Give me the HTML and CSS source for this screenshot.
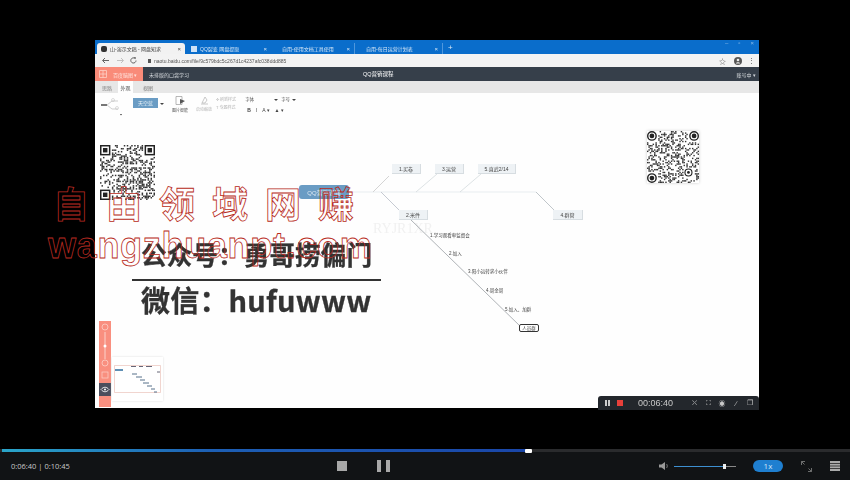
FILE: index.html
```html
<!DOCTYPE html>
<html lang="en">
<head>
    <meta charset="UTF-8">
    <title>Video player</title>
    <link rel="stylesheet" href="styles.css">
</head>
<body>
    <div class="stage">
        <div class="window">
            <div class="tabs">
                <div class="tab active"><span class="favicon dark"></span><span class="tab-name">山-演示文稿 - 网盘知求</span><span class="tab-x">×</span></div>
                <div class="tab"><span class="favicon blue"></span><span class="tab-name">QQ裂变 网盘提取</span><span class="tab-x">×</span></div>
                <div class="tab sep"><span class="tab-name indent">自用-使用文档工具使用</span><span class="tab-x">×</span></div>
                <div class="tab sep wide"><span class="tab-name indent">自用-每日运营计划表</span><span class="tab-x">×</span></div>
                <span class="tab-add">+</span>
                <div class="win-btns"><span>–</span><span>▫</span><span>×</span></div>
            </div>
            <div class="address">
                <svg class="nav" width="46" height="9" viewBox="0 0 46 9">
                    <path d="M9 4.500H3M5 2 2.500 4.500 5 7" fill="none" stroke="#555" stroke-width=".9"/>
                    <path d="M17 4.500h6M21 2l2.500 2.500L21 7" fill="none" stroke="#bbb" stroke-width=".9"/>
                    <path d="M35 2.400a2.600 2.600 0 1 0 1 2.100" fill="none" stroke="#555" stroke-width=".9"/>
                    <path d="M33.800 1l2 .2-.2 2z" fill="#555"/>
                </svg>
                <span class="lock"></span>
                <span class="url">naotu.baidu.com/file/9c579bdc5c267d1c4237afc038ddd885</span>
                <span class="star">☆</span>
                <svg class="avatar" width="8" height="8" viewBox="0 0 8 8"><circle cx="4" cy="4" r="4" fill="#555"/><circle cx="4" cy="3" r="1.300" fill="#eee"/><path d="M1.800 6.400c.6-1.500 3.800-1.500 4.400 0z" fill="#eee"/></svg>
                <span class="kebab">⋮</span>
            </div>
            <div class="app-head">
                <div class="brand">
                    <svg width="8" height="8" viewBox="0 0 8 8"><path d="M.5.5h7v7h-7zM.5 4h7M4 .5v7" fill="none" stroke="#ffd9d0" stroke-width=".7"/></svg>
                    <span>百度脑图 ▾</span>
                </div>
                <span class="doc-path">未排版的口袋学习</span>
                <span class="doc-title">QQ营销课程</span>
                <span class="account">账号中 ▾</span>
            </div>
            <div class="menu-tabs">
                <span>思路</span>
                <span class="on">外观</span>
                <span>视图</span>
            </div>
            <div class="toolbar">
                <svg class="tool-map" width="24" height="20" viewBox="0 0 24 20">
                    <path d="M1 9h6" stroke="#555" stroke-width="1.600"/>
                    <path d="M7 9 12 5M7 9l5 4M12 5h6M12 13h6" stroke="#bbb" fill="none" stroke-width=".7"/>
                    <circle cx="13" cy="4" r="1.500" fill="none" stroke="#bbb" stroke-width=".5"/>
                    <circle cx="17" cy="12" r="1.500" fill="none" stroke="#bbb" stroke-width=".5"/>
                    <path d="M20 18l2 0-1 1.500z" fill="#333"/>
                </svg>
                <span class="skin-btn">天空蓝</span>
                <span class="caret"></span>
                <div class="tool-col first">
                    <svg width="13" height="10" viewBox="0 0 13 10"><path d="M2 .5h6v8H2z" fill="none" stroke="#999" stroke-width=".7"/><path d="M6 3l5 2-5 3z" fill="#555"/></svg>
                    <span>图片智能</span>
                </div>
                <div class="tool-col pale">
                    <svg width="9" height="9" viewBox="0 0 9 9"><path d="M1 8h7M2 7l3-6 2 3-2 3z" fill="none" stroke="#bbb" stroke-width=".8"/></svg>
                    <span>启动缩放</span>
                </div>
                <div class="tool-rows pale">
                    <span>✣ 刷新样式</span>
                    <span>T 专题样式</span>
                </div>
                <div class="font-tools">
                    <div class="font-row"><span class="font-name">字体</span><span class="caret small"></span><span class="font-size">字号</span><span class="caret small"></span></div>
                    <div class="font-row icons"><b>B</b><i>I</i><span>A ▾</span><span class="bucket">▲ ▾</span></div>
                </div>
            </div>
            <div class="canvas">
                <div class="faint">RYJR1XR</div>
                <svg class="links" width="664" height="293" viewBox="95 115 664 293">
                    <path d="M349 192H536" stroke="#e8edf0" stroke-width="1" fill="none"/>
                    <path d="M373 192 389 176" stroke="#d4d4d4" stroke-width="1" fill="none"/>
                    <path d="M416 192 437 174M460 192 481 174" stroke="#d4dadd" stroke-width=".8" fill="none"/>
                    <path d="M536 192 554 210" stroke="#c0c6ca" stroke-width="1" fill="none"/>
                    <path d="M381 192 399 210" stroke="#b8bcc6" stroke-width=".8" fill="none"/>
                    <path d="M410 219 521 327" stroke="#9aa0a4" stroke-width=".8" fill="none"/>
                </svg>
                <div class="node root">QQ营销课程</div>
                <div class="node n1">1.买卷</div>
                <div class="node n2">3.运营</div>
                <div class="node n3">5.直武2/14</div>
                <div class="node n4">2.米件</div>
                <div class="node n5">4.群管</div>
                <div class="node n6">人员群</div>
                <span class="leaf l1">1.学习观看率监督会</span>
                <span class="leaf l2">2.加入</span>
                <span class="leaf l3">3.阳小运转求小伙伴</span>
                <span class="leaf l4">4.周金周</span>
                <span class="leaf l5">5.加入、加群</span>
                <svg class="qr qr-left" data-seed="17" data-round="0" width="55" height="55" viewBox="0 0 37 37"></svg>
                <svg class="qr qr-right" data-seed="91" data-round="1" width="52" height="52" viewBox="0 0 37 37"></svg>
                <div class="zoom-bar">
                    <svg width="12" height="86" viewBox="0 0 12 86">
                        <circle cx="6" cy="6" r="3" fill="none" stroke="#fbd0c8" stroke-width=".8"/>
                        <path d="M6 11V38" stroke="#fde3de" stroke-width=".8"/>
                        <circle cx="6" cy="25" r="1.500" fill="#fff"/>
                        <circle cx="6" cy="42" r="3" fill="none" stroke="#fbd0c8" stroke-width=".8"/>
                        <rect x="3" y="51" width="6" height="6" fill="none" stroke="#fbd0c8" stroke-width=".7"/>
                        <rect y="62" width="12" height="13" fill="#4b4d5c"/>
                        <path d="M2 68.500c2.500-3 5.500-3 8 0-2.500 3-5.500 3-8 0z" fill="none" stroke="#fff" stroke-width=".8"/>
                        <circle cx="6" cy="68.500" r="1" fill="#fff"/>
                    </svg>
                </div>
                <div class="minimap">
                    <svg width="47" height="28" viewBox="0 0 47 28">
                        <path d="M.5.500h46v27H.500z" fill="#fff" stroke="#e7b9ae" stroke-width=".6"/>
                        <path d="M1 5h8" stroke="#5f8fb4" stroke-width="2"/>
                        <path d="M17 1.500h5M25 1.500h4M32 1.500h6M43 7h3" stroke="#667" stroke-width="1"/>
                        <path d="M18 9h5M22 12h6M26 15h5M29 18h6M33 21h5M37 24h4M40 27h3" stroke="#56708a" stroke-width="1"/>
                    </svg>
                </div>
            </div>
            <div class="rec-bar">
                <span class="rec-pause"></span>
                <span class="rec-dot"></span>
                <span class="rec-time">00:06:40</span>
                <span class="rec-ico">⛌</span>
                <span class="rec-ico">⛶</span>
                <span class="rec-ico">◉</span>
                <span class="rec-ico">∕</span>
                <span class="rec-ico">❐</span>
            </div>
        </div>
        <div class="wm wm-cn"><span>自</span><span>由</span><span>领</span><span>域</span><span>网</span><span>赚</span></div>
        <div class="promo promo-top">公众号：勇哥捞偏门</div>
        <div class="wm wm-en">wangzhuanpt.com</div>
        <div class="promo-rule"></div>
        <div class="promo promo-bottom">微信：hufuwww</div>
    </div>

    <div class="player">
        <div class="progress"><div class="progress-fill"></div><span class="progress-knob"></span></div>
        <div class="controls">
            <span class="time">0:06:40 | 0:10:45</span>
            <span class="stop"></span>
            <span class="pause"></span>
            <svg class="vol" width="10" height="10" viewBox="0 0 10 10"><path d="M0 3.500h2.500L6 1v8L2.500 6.500H0z" fill="#999"/><path d="M7.500 3c1 1 1 3 0 4" stroke="#777" fill="none"/></svg>
            <div class="vol-track"><div class="vol-fill"></div><span class="vol-knob"></span></div>
            <span class="speed">1x</span>
            <svg class="full" width="11" height="11" viewBox="0 0 11 11"><path d="M4 .500H.500V4M.500.500l3 3M7 10.500h3.500V7M10.500 10.500l-3-3" fill="none" stroke="#777" stroke-width=".9"/></svg>
            <svg class="list" width="10" height="10" viewBox="0 0 10 10"><path d="M0 0h10v10H0z" fill="#aaa"/><path d="M0 2.500h10M0 5h10M0 7.500h10" stroke="#222" stroke-width=".8"/></svg>
        </div>
    </div>
    <script src="qr.js"></script>
</body>
</html>
```

FILE: styles.css
```css
* {
    box-sizing: border-box;
}
body {
    margin: 0;
    width: 850px;
    height: 480px;
    overflow: hidden;
    background: #000;
    font-family: "Liberation Sans", "Noto Sans CJK SC", sans-serif;
}
.stage {
    position: relative;
    height: 449px;
    padding: 40px 0 41px 95px;
}
.window {
    position: relative;
    width: 664px;
    height: 368px;
    display: flex;
    flex-direction: column;
    background: #fefefe;
    filter: blur(.4px);
}

/* browser chrome */
.tabs {
    height: 14px;
    display: flex;
    align-items: flex-end;
    padding-left: 2px;
    background: #0a6dcb;
    color: #d8e8f7;
    font-size: 5px;
}
.tab {
    width: 84px;
    height: 11px;
    display: flex;
    align-items: center;
    gap: 3px;
    padding: 0 4px;
}
.tab.active {
    width: 88px;
    margin-right: 2px;
    background: #f2f2f2;
    color: #444;
    border-radius: 3px 3px 0 0;
}
.tab.sep {
    border-right: 1px solid #4f97dc;
}
.tab.wide {
    width: 88px;
}
.favicon {
    width: 6px;
    height: 6px;
    flex: none;
}
.favicon.dark {
    background: #333;
    border-radius: 2px;
}
.favicon.blue {
    background: #cfe3f7;
}
.tab-name {
    flex: 1;
    white-space: nowrap;
    overflow: hidden;
}
.tab-name.indent {
    padding-left: 7px;
}
.tab-x {
    font-size: 6px;
}
.tab-add {
    height: 11px;
    margin-left: 5px;
    font-size: 8px;
    line-height: 10px;
}
.win-btns {
    margin-left: auto;
    height: 14px;
    display: flex;
    gap: 10px;
    padding-right: 5px;
    font-size: 6px;
    color: #8fbde8;
}
.address {
    height: 13px;
    display: flex;
    align-items: center;
    padding: 0 4px 0 5px;
    background: #f3f3f3;
    color: #555;
    font-size: 5px;
}
.lock {
    width: 3px;
    height: 4px;
    margin-left: 2px;
    background: #555;
}
.url {
    margin-left: 3px;
    width: 140px;
    white-space: nowrap;
    overflow: hidden;
}
.star {
    margin-left: auto;
    font-size: 7px;
}
.avatar {
    margin-left: 8px;
}
.kebab {
    margin-left: 6px;
    font-size: 7px;
}

/* app header */
.app-head {
    position: relative;
    height: 14px;
    display: flex;
    align-items: center;
    background: #363f4a;
    color: #d5d9dd;
    font-size: 5px;
}
.brand {
    width: 48px;
    height: 100%;
    display: flex;
    align-items: center;
    gap: 6px;
    padding-left: 4px;
    background: #f98b79;
    color: #ffe3dd;
}
.doc-path {
    margin-left: 6px;
}
.doc-title {
    margin-left: 174px;
    color: #fff;
    font-size: 5.500px;
}
.account {
    margin-left: auto;
    padding-right: 3px;
}
.menu-tabs {
    height: 12px;
    display: flex;
    align-items: stretch;
    padding-left: 2px;
    background: #e7e7e7;
    color: #7d7d7d;
    font-size: 5px;
}
.menu-tabs span {
    width: 20px;
    display: flex;
    align-items: center;
    justify-content: center;
    margin-right: 1px;
}
.menu-tabs .on {
    width: 15px;
    background: #fefefe;
    color: #555;
    margin-right: 5px;
}
.toolbar {
    height: 22px;
    display: flex;
    align-items: flex-start;
    padding: 3px 0 0 5px;
    background: #fefefe;
    color: #555;
    font-size: 4px;
}
.tool-map {
    flex: none;
}
.skin-btn {
    width: 25px;
    height: 10px;
    margin: 2px 0 0 9px;
    text-align: center;
    line-height: 10px;
    font-size: 5px;
    background: #6a9cc4;
    color: #e6f0f7;
}
.caret {
    width: 0;
    height: 0;
    margin: 7px 0 0 2px;
    border: 2px solid transparent;
    border-top-color: #444;
    border-bottom: 0;
}
.caret.small {
    margin: 3px 0 0 2px;
}
.tool-col {
    display: flex;
    flex-direction: column;
    align-items: center;
    white-space: nowrap;
}
.tool-col span {
    margin-top: 1px;
}
.tool-col.first {
    margin-left: 8px;
}
.tool-col.pale {
    margin-left: 8px;
}
.pale {
    color: #b5b5b5;
}
.tool-rows {
    display: flex;
    flex-direction: column;
    gap: 2px;
    margin-left: 4px;
    white-space: nowrap;
}
.font-tools {
    margin-left: 9px;
    font-size: 4.500px;
}
.font-row {
    display: flex;
    align-items: flex-start;
    height: 8px;
    line-height: 7px;
}
.font-name {
    width: 27px;
}
.font-size {
    margin-left: 3px;
}
.font-row.icons {
    gap: 5px;
    margin-top: 3px;
    padding-left: 2px;
    font-size: 5px;
    color: #444;
}

/* mind map */
.canvas {
    position: relative;
    flex: 1;
}
.links {
    position: absolute;
    left: 0;
    top: 0;
}
.faint {
    position: absolute;
    left: 278px;
    top: 106px;
    font-family: "Liberation Serif", serif;
    font-size: 14px;
    color: #f1f1f1;
}
.node {
    position: absolute;
    display: flex;
    align-items: center;
    justify-content: center;
    height: 10px;
    font-size: 5px;
    color: #444;
    background: #eef2f5;
    border-bottom: 1px solid #d7dde1;
    border-right: 1px solid #d7dde1;
}
.root {
    left: 204px;
    top: 70px;
    width: 50px;
    height: 14px;
    border: 0;
    border-radius: 3px;
    background: #6a9cc4;
    color: #dbe8f2;
    font-size: 6px;
}
.n1 { left: 297px; top: 49px; width: 29px; }
.n2 { left: 340px; top: 49px; width: 29px; }
.n3 { left: 383px; top: 49px; width: 38px; }
.n4 { left: 304px; top: 95px; width: 29px; }
.n5 { left: 458px; top: 95px; width: 30px; }
.n6 {
    left: 424px;
    top: 209px;
    width: 20px;
    height: 8px;
    background: #fff;
    border: 1px solid #333;
    border-radius: 2px;
    font-size: 4.500px;
}
.leaf {
    position: absolute;
    font-size: 4.500px;
    color: #444;
    white-space: nowrap;
    line-height: 7px;
}
.l1 { left: 335px; top: 117px; }
.l2 { left: 354px; top: 135px; }
.l3 { left: 373px; top: 153px; }
.l4 { left: 391px; top: 172px; }
.l5 { left: 410px; top: 191px; }
.qr {
    position: absolute;
    background: #fff;
}
.qr-left {
    left: 5px;
    top: 30px;
}
.qr-right {
    left: 552px;
    top: 16px;
    box-shadow: 0 0 3px #ccc;
}
.zoom-bar {
    position: absolute;
    left: 4px;
    top: 206px;
    width: 12px;
    height: 86px;
    background: #f98f7f;
    line-height: 0;
}
.minimap {
    position: absolute;
    left: 17px;
    top: 242px;
    width: 51px;
    height: 44px;
    padding: 8px 2px;
    background: #fff;
    box-shadow: 0 0 2px #ddd;
}

/* screen recorder bar */
.rec-bar {
    position: absolute;
    right: 0;
    top: 356px;
    width: 161px;
    height: 14px;
    display: flex;
    align-items: center;
    padding-left: 7px;
    background: #23272c;
    border-radius: 3px 3px 0 0;
    color: #c8c8c8;
}
.rec-pause {
    width: 5px;
    height: 6px;
    border: solid #ccc;
    border-width: 0 2px;
}
.rec-dot {
    width: 6px;
    height: 6px;
    margin-left: 7px;
    background: #e8403a;
}
.rec-time {
    margin: 0 15px 0 15px;
    font-size: 9px;
    width: 34px;
    white-space: nowrap;
}
.rec-ico {
    width: 14px;
    font-size: 7px;
    text-align: center;
}

/* watermark on top of the video */
.wm {
    position: absolute;
    color: transparent;
    -webkit-text-stroke: .8px #b82a20;
    white-space: nowrap;
}
.wm-cn {
    left: 53px;
    top: 178px;
    display: flex;
    gap: 17px;
    font-family: "Noto Sans CJK SC", sans-serif;
    font-size: 36px;
    font-weight: 700;
    line-height: 48px;
}
.wm-en {
    left: 48px;
    top: 228px;
    font-size: 36px;
    font-weight: 700;
    letter-spacing: .7px;
    line-height: 36px;
}
.promo {
    position: absolute;
    left: 141px;
    color: #333;
    font-family: "Noto Sans CJK SC", sans-serif;
    font-weight: 700;
    white-space: nowrap;
    -webkit-text-stroke: .3px #333;
    filter: blur(.4px);
}
.promo-top {
    top: 234px;
    font-size: 25.700px;
    line-height: 40px;
}
.promo-bottom {
    top: 279px;
    font-size: 29px;
    line-height: 40px;
    letter-spacing: .2px;
}
.promo-rule {
    position: absolute;
    left: 132px;
    top: 279px;
    width: 249px;
    height: 2px;
    background: #333;
}

/* player */
.player {
    height: 31px;
    background: #111315;
}
.progress {
    position: relative;
    height: 3px;
    background: #2a2b2d;
}
.progress-fill {
    width: 525px;
    height: 100%;
    margin-left: 2px;
    background: linear-gradient(90deg, #2aa5c9, #1d5fb4 40%, #1a46a8);
}
.progress-knob {
    position: absolute;
    left: 525px;
    top: 0;
    width: 7px;
    height: 4px;
    background: #fff;
    border-radius: 1px;
}
.controls {
    height: 28px;
    display: flex;
    align-items: center;
}
.time {
    width: 326px;
    margin-left: 11px;
    font-family: "Open Sans", sans-serif;
    font-size: 7.500px;
    color: #c8c8c8;
}
.stop {
    width: 10px;
    height: 10px;
    background: #a8a8a8;
}
.pause {
    width: 13px;
    height: 12px;
    margin-left: 30px;
    border: solid #a8a8a8;
    border-width: 0 4px;
}
.vol {
    margin-left: 269px;
}
.vol-track {
    position: relative;
    width: 62px;
    height: 1px;
    margin-left: 5px;
    background: #888;
}
.vol-fill {
    width: 50px;
    height: 1px;
    background: #3d8fd0;
}
.vol-knob {
    position: absolute;
    left: 49px;
    top: -2px;
    width: 3px;
    height: 5px;
    background: #eee;
}
.speed {
    width: 30px;
    height: 12px;
    margin-left: 17px;
    border-radius: 6px;
    background: #1f7fd0;
    color: #cfe5f7;
    font-family: "Open Sans", sans-serif;
    font-size: 8px;
    line-height: 12px;
    text-align: center;
}
.full {
    margin-left: 18px;
}
.list {
    margin-left: 18px;
}
```

FILE: qr.js
```js
// draws the two scan codes, a fixed pseudo random pattern
function drawCode(svg) {
    let seed = Number(svg.dataset.seed);
    const round = svg.dataset.round === '1';
    const size = 37;
    let out = '';

    function next() {
        seed = (seed * 1103515245 + 12345) % 2147483648;
        return seed / 2147483648;
    }

    function inFinder(x, y) {
        const low = v => v < 8;
        const high = v => v > size - 9;
        if (round && x > size - 12 && x < size - 3 && y > size - 12 && y < size - 3) return true;
        return (low(x) && low(y)) || (high(x) && low(y)) || (low(x) && high(y));
    }

    for (let y = 0; y < size; y++) {
        for (let x = 0; x < size; x++) {
            if (!inFinder(x, y) && next() < 0.36) {
                out += '<rect x="' + x + '" y="' + y + '" width="1" height="1" fill="#333"/>';
            }
        }
    }

    [[0, 0], [size - 7, 0], [0, size - 7]].forEach(([x, y]) => {
        if (round) {
            out += '<circle cx="' + (x + 3.5) + '" cy="' + (y + 3.5) + '" r="3" fill="none" stroke="#222"/>';
            out += '<circle cx="' + (x + 3.5) + '" cy="' + (y + 3.5) + '" r="1.7" fill="#222"/>';
        } else {
            out += '<rect x="' + (x + .5) + '" y="' + (y + .5) + '" width="6" height="6" fill="#fff" stroke="#222"/>';
            out += '<rect x="' + (x + 2) + '" y="' + (y + 2) + '" width="3" height="3" fill="#222"/>';
        }
    });

    if (round) {
        out += '<circle cx="' + (size - 7.5) + '" cy="' + (size - 7.5) + '" r="2.5" fill="none" stroke="#222" stroke-width=".8"/>';
        out += '<circle cx="' + (size - 7.5) + '" cy="' + (size - 7.5) + '" r="1" fill="#222"/>';
    }

    svg.innerHTML = out;
}

document.querySelectorAll('.qr').forEach(drawCode);
```
